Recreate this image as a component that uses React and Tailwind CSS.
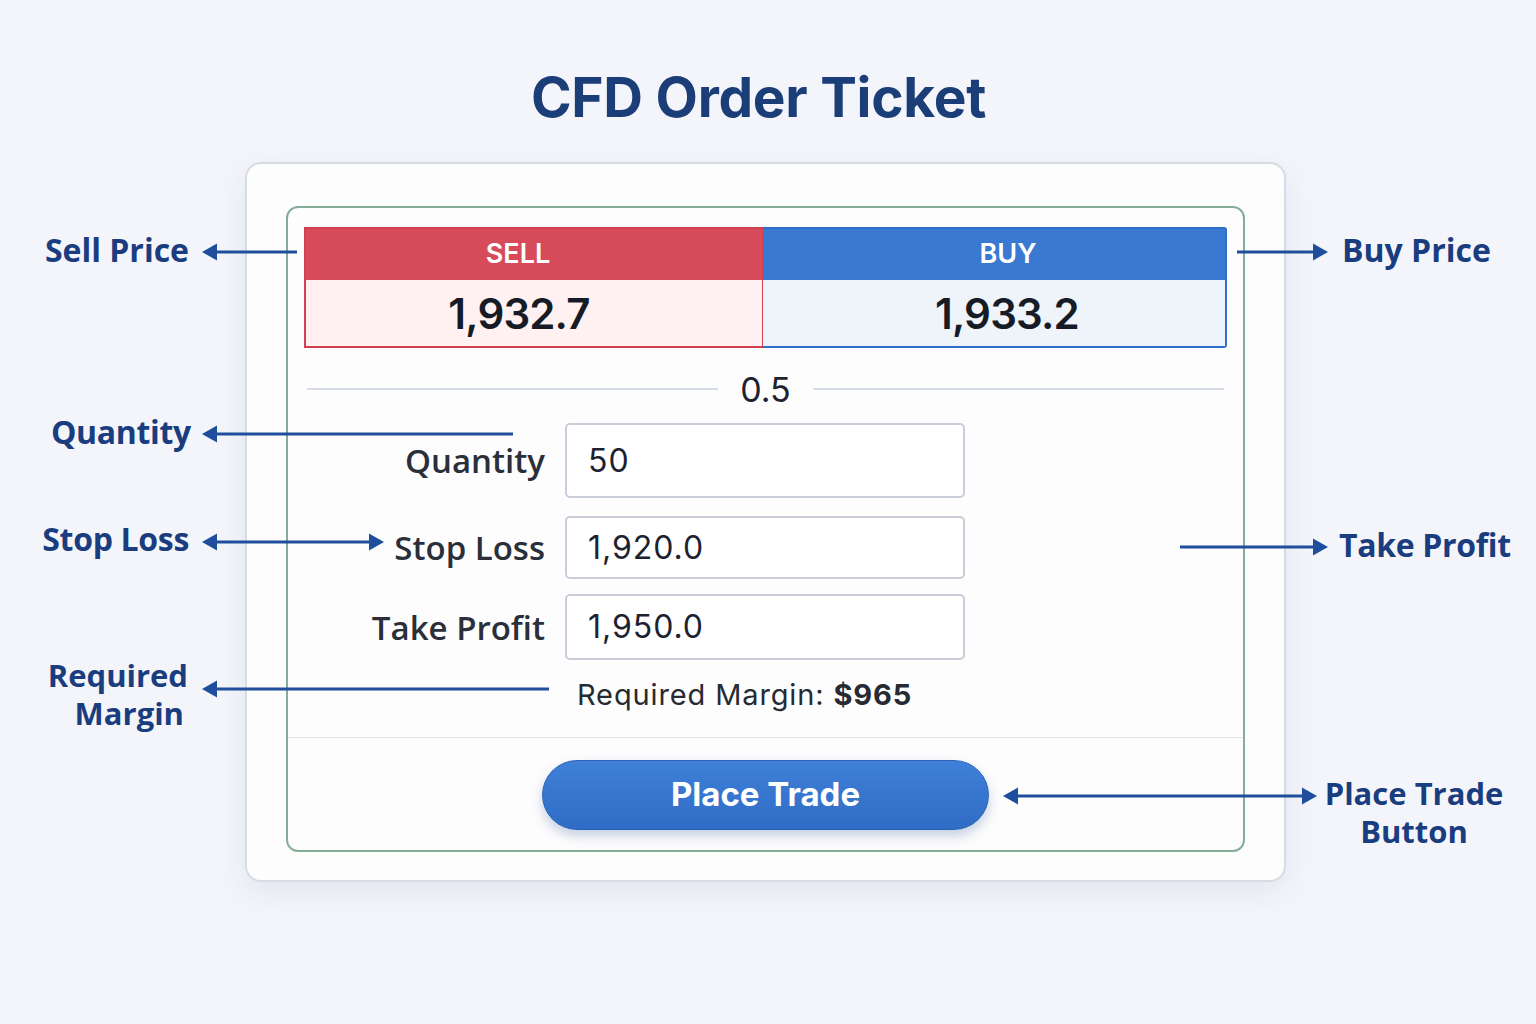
import React from 'react';

const ARROW = '#1f4f9c';

// arrow shaft + triangular heads, drawn on the overlay canvas
const Arrow = ({ x1, x2, y, start = false, end = false }) => {
  const dir = x2 > x1 ? 1 : -1;
  const sx1 = start ? x1 + dir * 13 : x1;
  const sx2 = end ? x2 - dir * 13 : x2;
  return (
    <g>
      <line x1={sx1} y1={y} x2={sx2} y2={y} stroke={ARROW} strokeWidth="3" />
      {end && (
        <polygon
          points={`${x2},${y} ${x2 - dir * 15},${y - 8.5} ${x2 - dir * 15},${y + 8.5}`}
          fill={ARROW}
        />
      )}
      {start && (
        <polygon
          points={`${x1},${y} ${x1 + dir * 15},${y - 8.5} ${x1 + dir * 15},${y + 8.5}`}
          fill={ARROW}
        />
      )}
    </g>
  );
};

const Field = ({ label, value, height }) => (
  <div className="flex items-center gap-[20px]">
    <div className="w-[241px] text-right text-[33px] font-semibold text-[#2a2f3a] font-['Open_Sans',sans-serif] leading-none">
      {label}
    </div>
    <div
      className={`w-[400px] ${height} bg-white border-2 border-[#c8cdd9] rounded-[5px] flex items-center pl-[21px] text-[32px] tracking-[0.03em] text-[#1d2230] font-['Inter',sans-serif]`}
    >
      {value}
    </div>
  </div>
);

const App = () => {
  return (
    <div className="relative w-full h-[1024px] overflow-hidden bg-[#f3f5fa] font-['Inter',sans-serif]">
      {/* Title */}
      <div className="ml-[245px] w-[1041px] pt-[67px] pr-[14px] text-center">
        <h1 className="text-[55px] leading-[60px] font-bold tracking-[-0.005em] text-[#1b3d78]">CFD Order Ticket</h1>
      </div>

      {/* Card */}
      <div className="ml-[245px] mt-[35px] w-[1041px] bg-[#fdfdfe] border-2 border-[#d6dbe6] rounded-[16px] pt-[42px] pb-[28px] px-[39px] shadow-[0_10px_30px_rgba(30,50,90,0.08)]">
        <div className="border-2 border-[#86ad97] rounded-[12px] bg-[#fdfdfe]">
          <div className="px-[16px] pt-[19px] pb-[25px]">
            {/* Prices */}
            <div className="flex">
              <div className="w-[459px] border-2 border-[#d3404f] border-r-[1px]">
                <div className="h-[51px] bg-[#d64a5a] flex items-center justify-center pr-[32px] text-white text-[27px] font-semibold">
                  SELL
                </div>
                <div className="h-[66px] bg-[#fff1f1] flex items-center justify-center pr-[30px] text-[42px] font-semibold tracking-[-0.02em] text-[#161b26]">
                  1,932.7
                </div>
              </div>
              <div className="flex-1 border-2 border-[#2f6fcb] border-l-0 rounded-tr-[3px] rounded-br-[3px]">
                <div className="h-[51px] bg-[#3a79d1] flex items-center justify-center pl-[28px] text-white text-[27px] font-semibold">
                  BUY
                </div>
                <div className="h-[66px] bg-[#eff3fa] flex items-center justify-center pl-[26px] text-[42px] font-semibold tracking-[-0.02em] text-[#161b26]">
                  1,933.2
                </div>
              </div>
            </div>

            {/* Spread */}
            <div className="mt-[18px] h-[46px] flex items-center gap-[22px] px-[3px]">
              <div className="flex-1 h-[2px] bg-[#d6dde9]"></div>
              <span className="text-[34px] text-[#1d2230]">0.5</span>
              <div className="flex-1 h-[2px] bg-[#d6dde9]"></div>
            </div>

            {/* Inputs */}
            <div className="mt-[11px] flex flex-col">
              <Field label="Quantity" value="50" height="h-[75px]" />
              <div className="h-[18px]"></div>
              <Field label="Stop Loss" value="1,920.0" height="h-[63px]" />
              <div className="h-[15px]"></div>
              <Field label="Take Profit" value="1,950.0" height="h-[66px]" />
            </div>

            <div className="mt-[18px] h-[34px] flex items-center pl-[273px] text-[29px] tracking-[0.03em] text-[#262a33]">
              <span>Required Margin:&nbsp;</span>
              <span className="font-bold">$965</span>
            </div>
          </div>

          <div className="border-t border-[#dfe3eb] pt-[22px] pb-[20px] flex justify-center">
            <button className="w-[447px] h-[70px] rounded-full bg-gradient-to-b from-[#3f80d8] to-[#2f6cc6] border border-[#2b62b5] text-white text-[33px] font-bold shadow-[0_6px_12px_rgba(30,70,140,0.25)]">
              Place Trade
            </button>
          </div>
        </div>
      </div>

      {/* Callout arrows */}
      <svg className="absolute inset-0 pointer-events-none" width="1536" height="1024">
        <Arrow x1={297} x2={202} y={252} end />
        <Arrow x1={1237} x2={1328} y={252} end />
        <Arrow x1={513} x2={202} y={434} end />
        <Arrow x1={202} x2={384} y={542} start end />
        <Arrow x1={549} x2={202} y={689} end />
        <Arrow x1={1180} x2={1328} y={547} end />
        <Arrow x1={1003} x2={1317} y={796} start end />
      </svg>

      {/* Callout labels */}
      <div className="absolute inset-0 pointer-events-none font-['Open_Sans',sans-serif] font-bold text-[32px] leading-[38px] text-[#1a3d80]">
        <div className="absolute left-0 top-[231px] w-[189px] text-right">Sell Price</div>
        <div className="absolute left-0 top-[413px] w-[191px] text-right tracking-[-0.01em]">Quantity</div>
        <div className="absolute left-0 top-[520px] w-[189px] text-right tracking-[-0.01em]">Stop Loss</div>
        <div className="absolute left-0 top-[656px] w-[188px] text-right text-[31px]">Required</div>
        <div className="absolute left-0 top-[694px] w-[184px] text-right text-[31px]">Margin</div>
        <div className="absolute left-[1342px] top-[231px]">Buy Price</div>
        <div className="absolute left-[1339px] top-[526px] tracking-[-0.01em]">Take Profit</div>
        <div className="absolute left-[1314px] top-[774px] w-[200px] text-center text-[31px]">Place Trade</div>
        <div className="absolute left-[1314px] top-[812px] w-[200px] text-center text-[31px]">Button</div>
      </div>
    </div>
  );
};

export default App;
